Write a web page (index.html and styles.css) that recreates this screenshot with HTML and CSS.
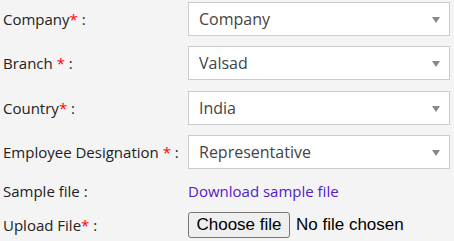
FILE: index.html
```html
<!DOCTYPE html>
<html>

<head>
  <meta charset="utf-8">
  <meta name="viewport" content="width=device-width">
  <title>Employee upload</title>

  <link rel="stylesheet" href="styles.css">
</head>

<body>
  <form class="form">

    <label class="label">Company<span class="req">*</span> :</label>
    <div class="pick">
      <select>
        <option>Company</option>
      </select>
    </div>

    <label class="label">Branch <span class="req">*</span> :</label>
    <div class="pick">
      <select>
        <option>Valsad</option>
      </select>
    </div>

    <label class="label">Country<span class="req">*</span> :</label>
    <div class="pick">
      <select>
        <option>India</option>
      </select>
    </div>

    <label class="label">Employee Designation <span class="req">*</span> :</label>
    <div class="pick">
      <select>
        <option>Representative</option>
      </select>
    </div>

    <label class="label">Sample file :</label>
    <div class="cell">
      <a class="link" href="#">Download sample file</a>
    </div>

    <label class="label">Upload File<span class="req">*</span> :</label>
    <div class="cell upload">
      <label class="filebtn">
        <input type="file" hidden>
        Choose file
      </label>
      <span class="filename">No file chosen</span>
    </div>

  </form>
</body>

</html>
```

FILE: styles.css
```css
* {
  box-sizing: border-box;
}

body {
  margin: 0;
  background-color: #f4f4f4;
  font-family: "Open Sans", sans-serif;
  color: #222;
}

.form {
  display: grid;
  grid-template-columns: 185px 262px;
  grid-template-rows: 34px 34px 34px 34px 22px 26px;
  row-gap: 10.4px;
  padding: 2px 0 0 3px;
  align-items: center;
}

.label {
  font-size: 15px;
}

.req {
  color: #f00;
}

.pick {
  position: relative;
  height: 34px;
}

.pick select {
  appearance: none;
  width: 100%;
  height: 34px;
  border: 1px solid #ccc;
  border-radius: 0;
  background-color: white;
  padding: 0 10px;
  font-family: "Open Sans", sans-serif;
  font-size: 16px;
  color: #444;
}

/* little grey arrow */
.pick::after {
  content: "";
  position: absolute;
  right: 10px;
  top: 15px;
  border-left: 4px solid transparent;
  border-right: 4px solid transparent;
  border-top: 6px solid #888;
  pointer-events: none;
}

.cell {
  display: flex;
  align-items: center;
}

.link {
  font-size: 15px;
  color: #5520c8;
  text-decoration: none;
}

.upload {
  gap: 6px;
  font-family: "Liberation Sans", Arial, sans-serif;
  font-size: 17px;
  color: #000;
}

.filebtn {
  display: flex;
  align-items: center;
  justify-content: center;
  width: 102px;
  height: 26px;
  background-color: #efefef;
  border: 1px solid #767676;
  border-radius: 3px;
}
```
